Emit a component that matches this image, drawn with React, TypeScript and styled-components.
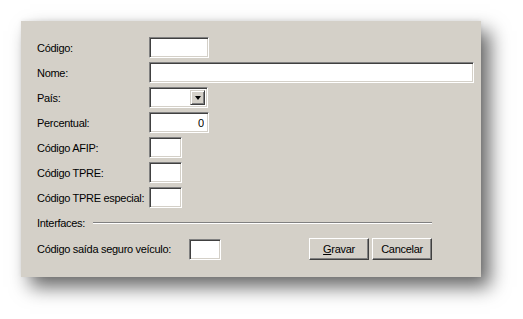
import React from "react";
import styled, { createGlobalStyle } from "styled-components";

/**CSS *******************************************/
const GlobalStyle = createGlobalStyle`
    html, body {
        margin: 0;
        background: #fff;
        font-family: "Liberation Sans", Arial, sans-serif;
        font-size: 11px;
        letter-spacing: -0.3px;
    }
`;
const DivPage = styled.div`
    box-sizing: border-box;
    width: 523px;
    height: 319px;
    padding: 21px 0 0 21px;
    overflow: hidden;
`;
const DivPanel = styled.div`
    box-sizing: border-box;
    width: 460px;
    height: 256px;
    background: #d4d0c8;
    padding: 16px 8px 0 16px;
    box-shadow: 9px 10px 18px rgba(0, 0, 0, 0.6), 0 -1px 4px rgba(0, 0, 0, 0.06);
    color: #000;
`;
const DivFields = styled.div`
    display: grid;
    grid-template-columns: 112px 1fr;
    grid-auto-rows: 21px;
    row-gap: 4px;
    align-items: center;
`;
const SpanLabel = styled.span`
    white-space: nowrap;
`;
const InputSunken = styled.input<{ $w: number; $right?: boolean }>`
    box-sizing: border-box;
    width: ${p => p.$w}px;
    height: 21px;
    margin: 0;
    padding: 0 4px;
    background: #fff;
    color: #000;
    border: 1px solid;
    border-color: #808080 #fff #fff #808080;
    box-shadow: inset 1px 1px #404040, inset -1px -1px #d4d0c8;
    font: 11px "Liberation Sans", Arial, sans-serif;
    text-align: ${p => (p.$right ? "right" : "left")};
    outline: none;
`;
const DivCombo = styled.div`
    box-sizing: border-box;
    width: 59px;
    height: 21px;
    display: flex;
    justify-content: flex-end;
    padding: 2px;
    background: #fff;
    border: 1px solid;
    border-color: #808080 #fff #fff #808080;
    box-shadow: inset 1px 1px #404040, inset -1px -1px #d4d0c8;
`;
const DivComboButton = styled.div`
    box-sizing: border-box;
    width: 15px;
    height: 15px;
    display: flex;
    align-items: center;
    justify-content: center;
    background: #d4d0c8;
    border: 1px solid;
    border-color: #d4d0c8 #404040 #404040 #d4d0c8;
    box-shadow: inset 1px 1px #fff, inset -1px -1px #808080;
`;
const SpanArrow = styled.span`
    width: 0;
    height: 0;
    border-left: 3.5px solid transparent;
    border-right: 3.5px solid transparent;
    border-top: 4px solid #000;
    margin-top: 1px;
`;
const DivSeparator = styled.div`
    display: flex;
    align-items: center;
    gap: 8px;
    margin: 8px 41px 0 0;
    height: 14px;
`;
const DivGroove = styled.div`
    flex: 1;
    border-top: 1px solid #808080;
    border-bottom: 1px solid #fff;
`;
const DivBottomRow = styled.div`
    display: flex;
    align-items: center;
    margin: 8px 41px 0 0;
    height: 22px;
`;
const SpanBottomLabel = styled.span`
    width: 152px;
    white-space: nowrap;
`;
const DivButtons = styled.div`
    margin-left: auto;
    display: flex;
    gap: 3px;
`;
const ButtonRaised = styled.button`
    box-sizing: border-box;
    width: 60px;
    height: 22px;
    margin: 0;
    padding: 0;
    background: #d4d0c8;
    border: 1px solid;
    border-color: #fff #404040 #404040 #fff;
    box-shadow: inset -1px -1px #808080;
    font: 11px "Liberation Sans", Arial, sans-serif;
    letter-spacing: -0.3px;
    color: #000;
`;
/**CSS end****************************************/

const fields: { label: string; width?: number; value?: string; combo?: boolean }[] = [
    { label: "Código:", width: 60 },
    { label: "Nome:", width: 325 },
    { label: "País:", combo: true },
    { label: "Percentual:", width: 60, value: "0" },
    { label: "Código AFIP:", width: 33 },
    { label: "Código TPRE:", width: 33 },
    { label: "Código TPRE especial:", width: 33 },
];

const App = () => {
    return (
        <DivPage>
            <GlobalStyle />
            <DivPanel>
                <DivFields>
                    {fields.map(f => (
                        <React.Fragment key={f.label}>
                            <SpanLabel>{f.label}</SpanLabel>
                            {f.combo ? (
                                <DivCombo>
                                    <DivComboButton>
                                        <SpanArrow />
                                    </DivComboButton>
                                </DivCombo>
                            ) : (
                                <InputSunken $w={f.width || 60} $right={!!f.value} value={f.value || ""} readOnly />
                            )}
                        </React.Fragment>
                    ))}
                </DivFields>
                <DivSeparator>
                    <span>Interfaces:</span>
                    <DivGroove />
                </DivSeparator>
                <DivBottomRow>
                    <SpanBottomLabel>Código saída seguro veículo:</SpanBottomLabel>
                    <InputSunken $w={32} value="" readOnly />
                    <DivButtons>
                        <ButtonRaised><u>G</u>ravar</ButtonRaised>
                        <ButtonRaised>Cancelar</ButtonRaised>
                    </DivButtons>
                </DivBottomRow>
            </DivPanel>
        </DivPage>
    );
};

export default App;
